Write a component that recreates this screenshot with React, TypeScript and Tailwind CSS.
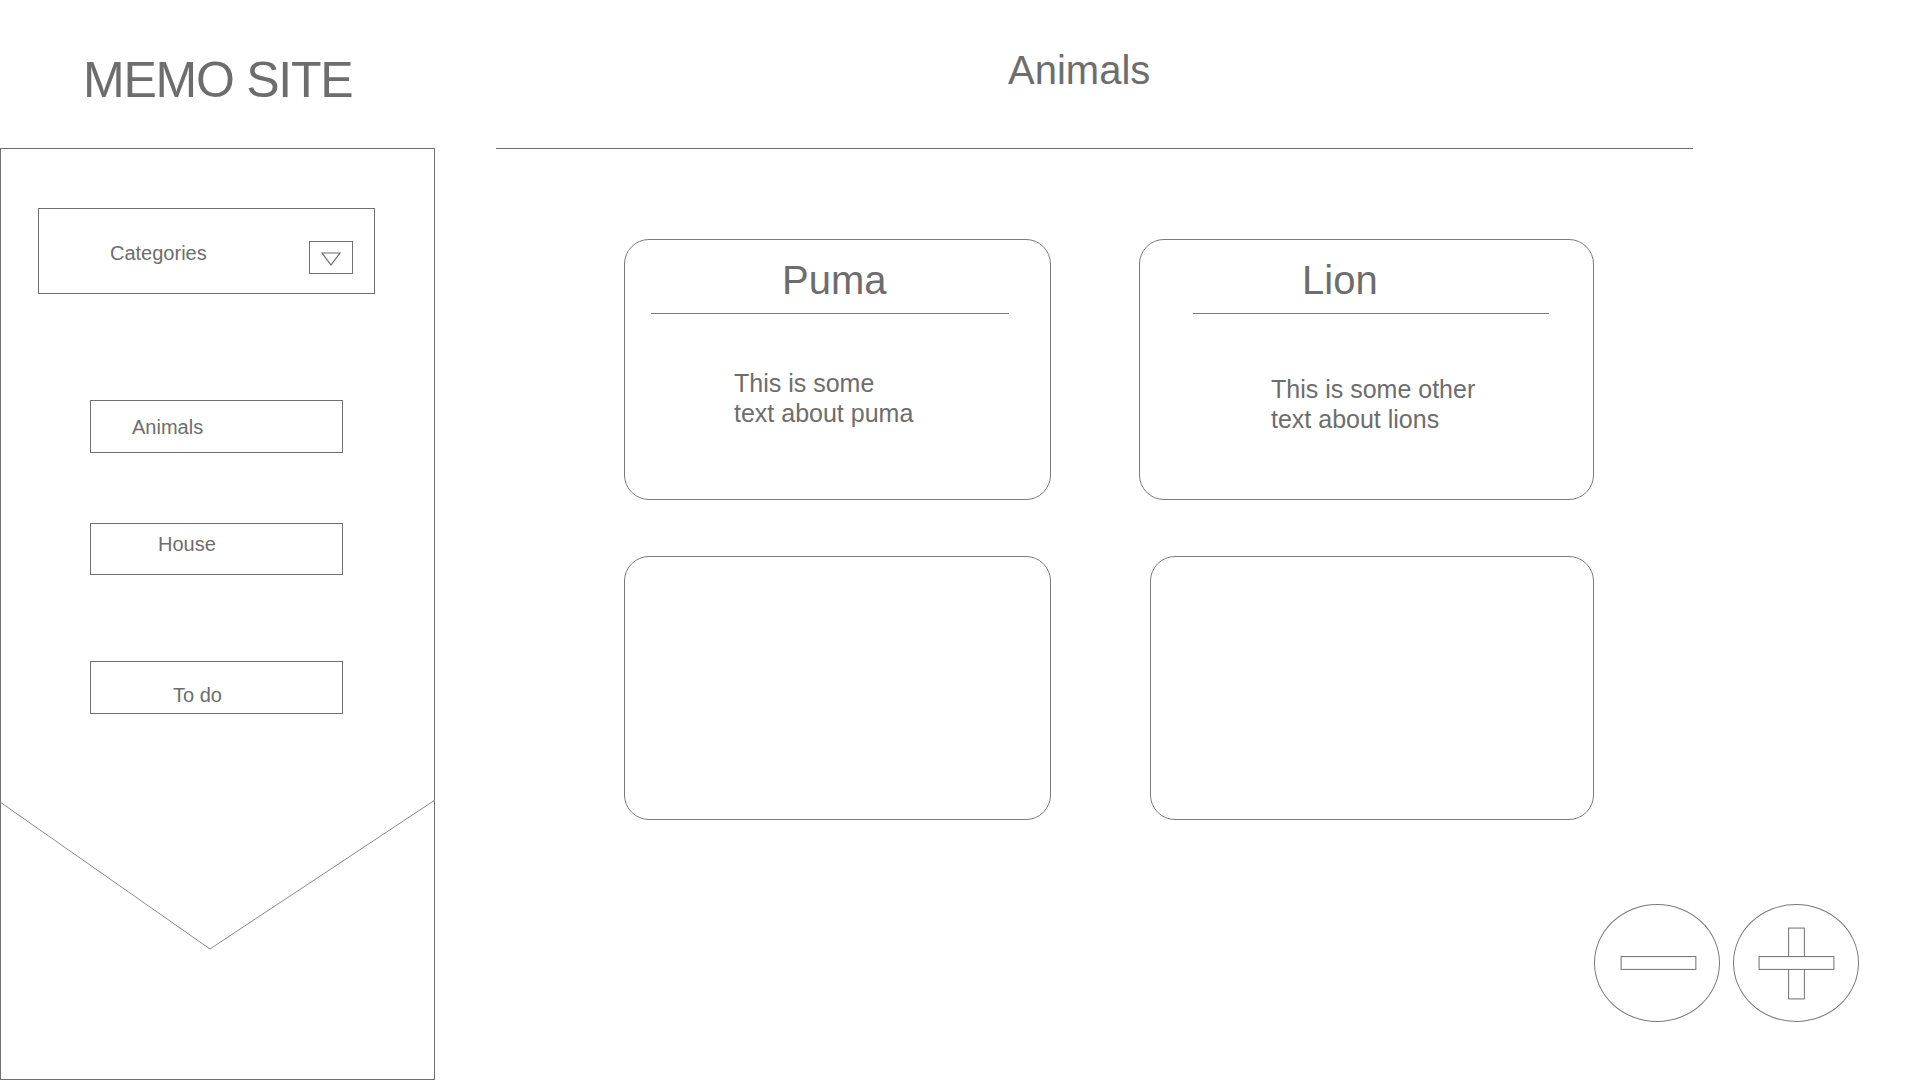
import React from "react";

// wireframe colours
const ink = "text-[#6d6d6d]";

const navItems = [
  { label: "Animals", gap: "mt-[106px]", h: "h-[53px]", pad: "pl-[41px] pt-[16px]" },
  { label: "House", gap: "mt-[70px]", h: "h-[52px]", pad: "pl-[67px] pt-[10px]" },
  { label: "To do", gap: "mt-[86px]", h: "h-[53px]", pad: "pl-[82px] pt-[23px]" },
];

const Sidebar = () => (
  <aside className="w-[435px] h-[932px] border border-[#707070] flex flex-col">
    {/* category select */}
    <div className="ml-[37px] mt-[59px] w-[337px] h-[86px] border border-[#707070] flex items-start pl-[71px] pr-[21px]">
      <span className="mt-[34px] text-[20px] leading-none">Categories</span>
      <div className="ml-auto mt-[32px] w-[44px] h-[33px] border border-[#707070] flex items-center justify-center">
        <svg width="20" height="14" viewBox="0 0 20 14" className="mt-[2px]">
          <polygon points="1,1 19,1 10,13" fill="none" stroke="#6d6d6d" strokeWidth="1.2" />
        </svg>
      </div>
    </div>

    {navItems.map((item) => (
      <div
        key={item.label}
        className={`${item.gap} ml-[89px] w-[253px] ${item.h} border border-[#707070] ${item.pad}`}
      >
        <span className="block text-[20px] leading-none">{item.label}</span>
      </div>
    ))}

    {/* envelope flap */}
    <svg width="433" height="152" viewBox="0 0 433 152" className="mt-[86px] block overflow-visible">
      <polyline points="-1,2 209,149 434,0" fill="none" stroke="#8a8a8a" strokeWidth="1" />
    </svg>
  </aside>
);

interface CardProps {
  width: string;
  height: string;
  title?: string;
  titleMl?: string;
  lineMl?: string;
  lineW?: string;
  bodyMl?: string;
  bodyMt?: string;
  body?: string[];
  className?: string;
}

const Card = ({ width, height, title, titleMl, lineMl, lineW, bodyMl, bodyMt, body, className }: CardProps) => (
  <div className={`${width} ${height} rounded-[25px] border border-[#7a7a7a] flex flex-col ${className ?? ""}`}>
    {title && (
      <>
        <span className={`${titleMl} mt-[20px] text-[40px] leading-none`}>{title}</span>
        <div className={`${lineMl} ${lineW} mt-[13px] h-px bg-[#7a7a7a]`} />
        <p className={`${bodyMl} ${bodyMt} text-[25px] leading-[30px]`}>
          {body?.map((line) => (
            <span key={line} className="block">
              {line}
            </span>
          ))}
        </p>
      </>
    )}
  </div>
);

const RoundButton = ({ plus }: { plus?: boolean }) => (
  <button className="w-[126px] h-[118px] rounded-[50%] border border-[#7a7a7a] bg-white flex items-center justify-center">
    <svg width="126" height="118" viewBox="0 0 126 118">
      {plus && <rect x="55.5" y="23.5" width="16" height="72" fill="white" stroke="#6d6d6d" strokeWidth="1" />}
      <rect x={plus ? 25.5 : 26.5} y="52.5" width="76" height="13" fill="white" stroke="#6d6d6d" strokeWidth="1" />
    </svg>
  </button>
);

export default function App() {
  return (
    <div className={`w-[1920px] h-[1080px] bg-white flex overflow-hidden ${ink} font-['Liberation_Sans',Arial,sans-serif]`}>
      {/* left column */}
      <div className="w-[436px] flex flex-col">
        <div className="h-[148px]">
          <h1 className="ml-[83px] mt-[55px] text-[50px] leading-none tracking-tight">MEMO SITE</h1>
        </div>
        <Sidebar />
      </div>

      {/* main */}
      <main className="flex-1 pl-[60px] flex flex-col">
        <h2 className="ml-[512px] mt-[50px] text-[40px] leading-none">Animals</h2>
        <div className="mt-[58px] w-[1197px] h-px bg-[#6d6d6d]" />

        <div className="mt-[90px] ml-[128px] flex">
          <Card
            width="w-[427px]"
            height="h-[261px]"
            title="Puma"
            titleMl="ml-[157px]"
            lineMl="ml-[26px]"
            lineW="w-[358px]"
            bodyMl="ml-[109px]"
            bodyMt="mt-[54px]"
            body={["This is some", "text about puma"]}
          />
          <Card
            width="w-[455px]"
            height="h-[261px]"
            className="ml-[88px]"
            title="Lion"
            titleMl="ml-[162px]"
            lineMl="ml-[53px]"
            lineW="w-[356px]"
            bodyMl="ml-[131px]"
            bodyMt="mt-[60px]"
            body={["This is some other", "text about lions"]}
          />
        </div>

        <div className="mt-[56px] ml-[128px] flex">
          <Card width="w-[427px]" height="h-[264px]" />
          <Card width="w-[444px]" height="h-[264px]" className="ml-[99px]" />
        </div>

        <div className="mt-[84px] pr-[61px] flex justify-end gap-[13px]">
          <RoundButton />
          <RoundButton plus />
        </div>
      </main>
    </div>
  );
}
